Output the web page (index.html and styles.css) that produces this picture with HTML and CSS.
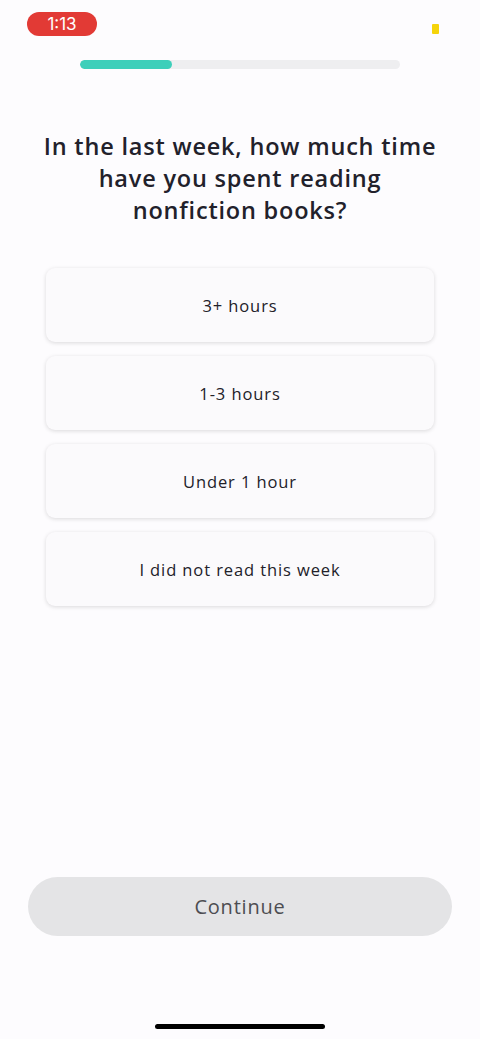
FILE: index.html
```html
<!DOCTYPE html>
<html lang="en">
<head>
<meta charset="utf-8">
<title>Quiz</title>
<link rel="stylesheet" href="styles.css">
</head>
<body>
<div class="screen">
  <div class="status">
    <span class="time">1:13</span>
    <span class="dot"></span>
  </div>
  <div class="progress"><div class="fill" style="width:28.75%"></div></div>
  <h1 class="question">In the last week, how much time<br>have you spent reading<br>nonfiction books?</h1>
  <div class="options">
    <div class="option">3+ hours</div>
    <div class="option">1-3 hours</div>
    <div class="option">Under 1 hour</div>
    <div class="option">I did not read this week</div>
  </div>
  <div class="bottom">
    <button class="continue">Continue</button>
    <div class="home"></div>
  </div>
</div>
</body>
</html>
```
FILE: styles.css
```css
* { box-sizing: border-box; }
html, body { margin: 0; padding: 0; }
body {
  background: #fdfcfe;
  font-family: "Open Sans", "Noto Sans", sans-serif;
  color: #22212b;
}
.screen {
  width: 480px;
  height: 1039px;
  display: flex;
  flex-direction: column;
}
.status {
  height: 48px;
  padding: 12px 41px 0 27px;
  display: flex;
  justify-content: space-between;
  align-items: flex-start;
}
.time {
  width: 70px;
  height: 24px;
  border-radius: 12px;
  background: #e23a35;
  color: #fff;
  font-family: "Inter", sans-serif;
  font-size: 17px;
  line-height: 24px;
  text-align: center;
}
.dot {
  width: 7px;
  height: 10px;
  margin-top: 12px;
  background: #f5d40a;
  border-radius: 1px;
}
.progress {
  margin: 12px 80px 0;
  height: 9px;
  border-radius: 5px;
  background: #eeeef0;
  overflow: hidden;
}
.fill {
  height: 100%;
  border-radius: 5px;
  background: #3dcfba;
}
.question {
  margin: 61px 20px 0;
  font-size: 23.5px;
  font-weight: 600;
  line-height: 32px;
  text-align: center;
  letter-spacing: 0.8px;
  white-space: nowrap;
  color: #22212b;
}
.options {
  margin: 42px 46px 0;
  display: flex;
  flex-direction: column;
  gap: 14px;
}
.option {
  height: 74px;
  border-radius: 9px;
  background: #fbfafc;
  box-shadow: 0 1px 4px rgba(0,0,0,0.14);
  display: flex;
  align-items: center;
  justify-content: center;
  font-size: 16.5px;
  letter-spacing: 0.9px;
  color: #222129;
}
.bottom {
  margin-top: auto;
  display: flex;
  flex-direction: column;
  align-items: center;
  padding-bottom: 10px;
}
.continue {
  width: 424px;
  height: 59px;
  border: none;
  border-radius: 30px;
  background: #e4e4e6;
  color: #4d4d52;
  font-family: "Open Sans", "Noto Sans", sans-serif;
  font-size: 20px;
  letter-spacing: 0.8px;
}
.home {
  margin-top: 88px;
  width: 170px;
  height: 5px;
  border-radius: 3px;
  background: #000;
}
```
